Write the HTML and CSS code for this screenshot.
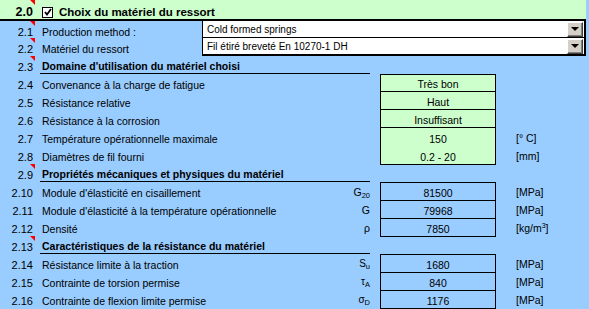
FILE: index.html
```html
<!DOCTYPE html>
<html lang="fr">
<head>
<meta charset="utf-8">
<link rel="stylesheet" href="styles.css">
</head>
<body>
<div class="sheet">
  <div class="row head">
    <div class="num"><span class="mark"></span>2.0</div>
    <div class="head-title">
      <span class="check"><svg width="8" height="8" viewBox="0 0 8 8"><path d="M1 4 L3 6.5 L7 1" fill="none" stroke="#000" stroke-width="1.8"/></svg></span>
      Choix du matériel du ressort
    </div>
  </div>

  <div class="row pick first-pick">
    <div class="num"><span class="mark"></span>2.1</div>
    <div class="label">Production method :</div>
    <div class="select"><span class="sel-text">Cold formed springs</span><span class="btn"><span class="arrow"></span></span></div>
  </div>
  <div class="row pick last-pick">
    <div class="num"><span class="mark"></span>2.2</div>
    <div class="label">Matériel du ressort</div>
    <div class="select"><span class="sel-text">Fil étiré breveté En 10270-1 DH</span><span class="btn"><span class="arrow"></span></span></div>
  </div>

  <div class="row section">
    <div class="num"><span class="mark"></span>2.3</div>
    <div class="sec-title">Domaine d'utilisation du matériel choisi</div>
  </div>
  <div class="row data">
    <div class="num">2.4</div>
    <div class="label">Convenance à la charge de fatigue</div>
    <div class="sym"></div>
    <div class="val green top">Très bon</div>
    <div class="unit"></div>
  </div>
  <div class="row data">
    <div class="num">2.5</div>
    <div class="label">Résistance relative</div>
    <div class="sym"></div>
    <div class="val green">Haut</div>
    <div class="unit"></div>
  </div>
  <div class="row data">
    <div class="num">2.6</div>
    <div class="label">Résistance à la corrosion</div>
    <div class="sym"></div>
    <div class="val green">Insuffisant</div>
    <div class="unit"></div>
  </div>
  <div class="row data">
    <div class="num">2.7</div>
    <div class="label">Température opérationnelle maximale</div>
    <div class="sym"></div>
    <div class="val green">150</div>
    <div class="unit">[° C]</div>
  </div>
  <div class="row data">
    <div class="num">2.8</div>
    <div class="label">Diamètres de fil fourni</div>
    <div class="sym"></div>
    <div class="val green">0.2 - 20</div>
    <div class="unit">[mm]</div>
  </div>

  <div class="row section">
    <div class="num"><span class="mark"></span>2.9</div>
    <div class="sec-title">Propriétés mécaniques et physiques du matériel</div>
  </div>
  <div class="row data">
    <div class="num">2.10</div>
    <div class="label">Module d'élasticité en cisaillement</div>
    <div class="sym">G<sub>20</sub></div>
    <div class="val top">81500</div>
    <div class="unit">[MPa]</div>
  </div>
  <div class="row data">
    <div class="num">2.11</div>
    <div class="label">Module d'élasticité à la température opérationnelle</div>
    <div class="sym">G</div>
    <div class="val">79968</div>
    <div class="unit">[MPa]</div>
  </div>
  <div class="row data">
    <div class="num">2.12</div>
    <div class="label">Densité</div>
    <div class="sym">ρ</div>
    <div class="val">7850</div>
    <div class="unit">[kg/m<sup>3</sup>]</div>
  </div>

  <div class="row section">
    <div class="num"><span class="mark"></span>2.13</div>
    <div class="sec-title">Caractéristiques de la résistance du matériel</div>
  </div>
  <div class="row data">
    <div class="num">2.14</div>
    <div class="label">Résistance limite à la traction</div>
    <div class="sym small">S<sub>u</sub></div>
    <div class="val top">1680</div>
    <div class="unit">[MPa]</div>
  </div>
  <div class="row data">
    <div class="num">2.15</div>
    <div class="label">Contrainte de torsion permise</div>
    <div class="sym small">τ<sub>A</sub></div>
    <div class="val">840</div>
    <div class="unit">[MPa]</div>
  </div>
  <div class="row data">
    <div class="num">2.16</div>
    <div class="label">Contrainte de flexion limite permise</div>
    <div class="sym small">σ<sub>D</sub></div>
    <div class="val">1176</div>
    <div class="unit">[MPa]</div>
  </div>
</div>
</body>
</html>
```
FILE: styles.css
```css
html, body {
  margin: 0;
  padding: 0;
  background: #99ccff;
}
body {
  width: 589px;
  height: 309px;
  overflow: hidden;
  font-family: "Liberation Sans", "DejaVu Sans", sans-serif;
  font-size: 10.5px;
  color: #000;
}
.sheet {
  display: flex;
  flex-direction: column;
  width: 589px;
}
.row {
  display: grid;
  height: 18px;
  align-items: stretch;
}
.row > div {
  box-sizing: border-box;
  display: flex;
  align-items: center;
  padding-top: 3px;
}
.num {
  position: relative;
  justify-content: flex-end;
  padding-right: 2px;
  font-size: 11px;
}
.mark {
  position: absolute;
  top: 0;
  right: 0;
  width: 0;
  height: 0;
  border-top: 5px solid #ff0000;
  border-left: 5px solid transparent;
}
/* header */
.head {
  width: 586px;
  height: 19px;
  background: #ccffcc;
  border-bottom: 2px solid #000;
  grid-template-columns: 35px 1fr;
  font-weight: bold;
}
.head > div {
  padding-top: 5px;
}
.head .num {
  font-size: 12.5px;
}
.head-title {
  padding-left: 7px;
  font-size: 11.5px;
}
.check {
  display: inline-flex;
  align-items: center;
  justify-content: center;
  width: 9px;
  height: 9px;
  border: 1px solid #000;
  background: #fff;
  margin-right: 6px;
}
/* dropdown rows */
.pick {
  grid-template-columns: 35px 167px 1fr;
  height: 17px;
}
.pick > div.num,
.pick > div.label {
  padding-top: 4px;
}
.row > .select {
  padding-top: 0;
  justify-content: space-between;
  background: #fff;
  border-left: 1px solid #000;
  border-right: 2px solid #000;
  width: 384px;
  font-size: 10px;
}
.first-pick .select {
  border-bottom: 1px solid #000;
}
.last-pick {
  height: 18px;
}
.last-pick .select {
  border-bottom: 2px solid #000;
}
.sel-text {
  padding-left: 4px;
}
.btn {
  box-sizing: border-box;
  width: 16px;
  height: 15px;
  margin-right: 1px;
  background: #d4d0c8;
  border-top: 1px solid #fff;
  border-left: 1px solid #fff;
  border-right: 1px solid #404040;
  border-bottom: 1px solid #404040;
  box-shadow: inset -1px -1px 0 #808080;
  display: flex;
  align-items: center;
  justify-content: center;
}
.arrow {
  width: 0;
  height: 0;
  border-top: 4px solid #000;
  border-left: 4px solid transparent;
  border-right: 4px solid transparent;
}
/* sections */
.section {
  grid-template-columns: 35px 1fr;
}
.row > .sec-title {
  margin-left: 5px;
  width: 330px;
  padding-left: 2px;
  border-bottom: 1px solid #000;
  font-weight: bold;
}
/* data rows */
.label {
  white-space: nowrap;
  overflow: hidden;
}
.row > .label {
  padding-left: 7px;
}
.data {
  grid-template-columns: 35px minmax(0, 1fr) auto 116px 93px;
}
.row > .sym {
  display: block;
  text-align: right;
  line-height: 18px;
  padding-top: 1px;
  padding-right: 10px;
  white-space: nowrap;
}
.sym sub {
  font-size: 7.5px;
  line-height: 0;
  vertical-align: -2px;
}
.row > .sym.small {
  font-size: 10px;
}
.row > .unit {
  display: block;
  line-height: 18px;
  padding-top: 1px;
  padding-left: 20px;
  white-space: nowrap;
}
.unit sup {
  font-size: 7px;
  line-height: 0;
  vertical-align: 4px;
}
.row > .val {
  justify-content: center;
  border-left: 1px solid #000;
  border-right: 1px solid #000;
  border-bottom: 1px solid #000;
}
.row > .val.top {
  border-top: 1px solid #000;
  padding-top: 2px;
}
.green {
  background: #ccffcc;
}
```
